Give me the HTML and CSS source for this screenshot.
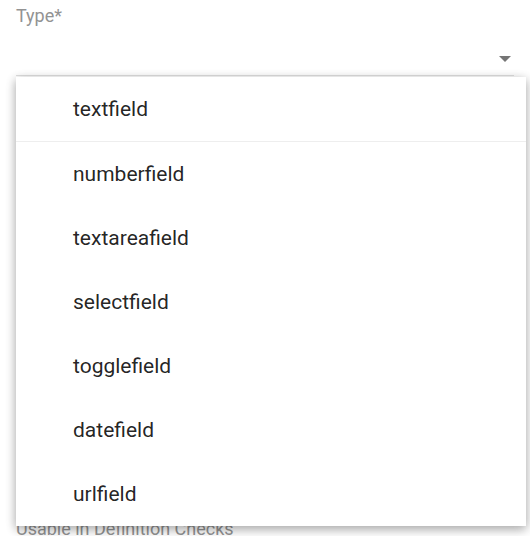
FILE: index.html
```html
<!DOCTYPE html>
<html>
<head>
<meta charset="utf-8">
<link rel="stylesheet" href="styles.css">
</head>
<body>
<div class="form">
  <div class="field">
    <div class="label">Type*</div>
    <div class="select-row"><span class="arrow"></span></div>
  </div>
  <div class="field next">
    <div class="label">Usable in Definition Checks</div>
  </div>
  <div class="menu">
    <div class="item">textfield</div>
    <div class="divider"></div>
    <div class="item">numberfield</div>
    <div class="item">textareafield</div>
    <div class="item">selectfield</div>
    <div class="item">togglefield</div>
    <div class="item">datefield</div>
    <div class="item">urlfield</div>
  </div>
</div>
</body>
</html>
```
FILE: styles.css
```css
html, body {
  margin: 0;
  padding: 0;
  background: #fff;
  font-family: Roboto, "Liberation Sans", sans-serif;
  overflow: hidden;
}
.form {
  position: relative;
  padding: 4px 16px 0;
}
.label {
  font-size: 18px;
  line-height: 24px;
  color: #939393;
}
.select-row {
  height: 48px;
  box-sizing: border-box;
  padding-top: 28px;
  border-bottom: 1px solid #e0e0e0;
  display: flex;
  justify-content: flex-end;
}
.arrow {
  width: 0;
  height: 0;
  margin-right: 3px;
  border-left: 6px solid transparent;
  border-right: 6px solid transparent;
  border-top: 6px solid #757575;
}
.field.next {
  margin-top: 441px;
}
.menu {
  position: absolute;
  top: 77px;
  left: 16px;
  width: 510px;
  background: #fff;
  box-shadow: 0 3px 10px rgba(0,0,0,0.16), 0 3px 10px rgba(0,0,0,0.23);
}
.item {
  height: 64px;
  line-height: 64px;
  padding-left: 57px;
  font-size: 21px;
  color: rgba(0,0,0,0.87);
}
.divider {
  height: 1px;
  background: #eeeeee;
}
```
